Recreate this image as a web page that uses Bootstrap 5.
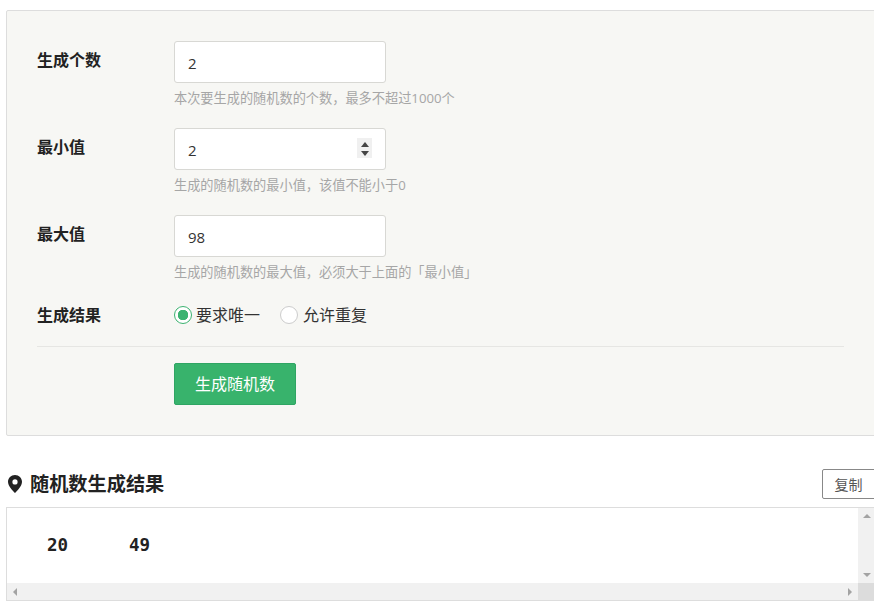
<!doctype html>
<html lang="zh"><head><meta charset="utf-8">
<link href="https://cdn.jsdelivr.net/npm/bootstrap@5.3.0/dist/css/bootstrap.min.css" rel="stylesheet">
<style>
html,body{height:602px;overflow:hidden;background:#fff}
body{font-family:"Open Sans","Noto Sans CJK SC",sans-serif;color:#222;font-size:16px}
.page-wrap{width:869px;margin-left:6px}
.gen-panel{margin-top:10px;height:426px;background:#f7f7f4;border:1px solid #ddd;border-radius:2px 0 0 2px;padding:30px 30px 0}
.gen-row{display:flex;height:87px}
.gen-label{width:137px;font-weight:700;font-size:16px;line-height:38px;color:#222}
.gen-field{position:relative}
.gen-input{width:212px;height:42px;border:1px solid #d8d8d4;border-radius:3px;padding:2px 13px 0;font-size:15px;color:#333;box-shadow:none;appearance:textfield}
.gen-input::-webkit-inner-spin-button{display:none}
.gen-spin{position:absolute;top:10px;left:183px;width:15px;height:20px;padding-top:2px;background:#f0f0f0;display:flex;flex-direction:column;justify-content:center;align-items:center;gap:4px}
.gen-help{font-size:13.2px;line-height:18px;margin-top:6px;color:#a6a6a6}
.gen-radio-row{display:flex;height:26px;align-items:center}
.gen-radio-row .gen-label{line-height:26px}
.gen-radio{margin:0;width:18px;height:18px;border:1px solid #ccc;background-color:#fff}
.gen-radio:checked{background-color:#fff;border-color:#3cb371;background-image:radial-gradient(circle,#3cb371 0 5px,transparent 5.5px)}
.gen-radio-text{font-size:16px;color:#333;margin:0 19px 0 5px}
.gen-radio-first{margin-left:4px;margin-right:20px}
.gen-rule{margin:18px 0 16px;border:0;border-top:1px solid #e6e6e3;opacity:1}
.gen-btn{margin-left:137px;width:122px;height:42px;padding:0;background:#38b36c;border:1px solid #2fa563;border-radius:2px;color:#fff;font-size:16px}
.res-head{height:71px;padding-top:33px}
.res-title{font-size:19.2px;font-weight:700;color:#222;margin:0;height:30px;line-height:30px;padding-left:2px}
.copy-btn{width:53px;height:30px;padding:0;border:1px solid #888;border-radius:2px 0 0 2px;background:#fff;color:#555;font-size:14px}
.res-box{height:94px;border:1px solid #ddd;border-right:0;display:flex;flex-direction:column}
.res-main{flex:1;display:flex;min-height:0}
.res-nums{flex:1;padding:25px 0 0 40px;font-family:"DejaVu Sans Mono",monospace;font-weight:700;font-size:17.5px;line-height:24px;color:#222}
.res-nums span{display:inline-block;width:82px}
.sb-v{width:17px;background:#f1f1f1;display:flex;flex-direction:column;justify-content:space-between;align-items:center;padding:6px 0}
.sb-h{height:17px;background:#f1f1f1;display:flex;align-items:center;justify-content:space-between}
.sb-corner{width:17px;height:17px;background:#dcdcdc}
.tri{width:0;height:0;border-style:solid;border-color:transparent}
.tri-up{border-width:0 4px 4px;border-bottom-color:#a3a3a3}
.tri-down{border-width:4px 4px 0;border-top-color:#a3a3a3}
.gen-spin .tri-up{border-width:0 4px 5px;border-bottom-color:#444}
.gen-spin .tri-down{border-width:5px 4px 0;border-top-color:#444}
.tri-left{border-width:4px 4px 4px 0;border-right-color:#a3a3a3;margin-left:6px}
.tri-right{border-width:4px 0 4px 4px;border-left-color:#a3a3a3;margin-left:auto;margin-right:6px}
</style></head>
<body>
<div class="page-wrap">
  <form class="gen-panel">
    <div class="gen-row"><div class="gen-label">生成个数</div><div class="gen-field"><input class="form-control gen-input" type="text" value="2"><div class="gen-help">本次要生成的随机数的个数，最多不超过1000个</div></div></div>
    <div class="gen-row"><div class="gen-label">最小值</div><div class="gen-field"><input class="form-control gen-input" type="number" value="2"><div class="gen-spin"><i class="tri tri-up"></i><i class="tri tri-down"></i></div><div class="gen-help">生成的随机数的最小值，该值不能小于0</div></div></div>
    <div class="gen-row"><div class="gen-label">最大值</div><div class="gen-field"><input class="form-control gen-input" type="text" value="98"><div class="gen-help">生成的随机数的最大值，必须大于上面的「最小值」</div></div></div>
    <div class="gen-radio-row">
      <div class="gen-label">生成结果</div>
      <input class="form-check-input gen-radio" type="radio" name="u" id="u1" checked><label class="gen-radio-text gen-radio-first" for="u1">要求唯一</label>
      <input class="form-check-input gen-radio" type="radio" name="u" id="u2"><label class="gen-radio-text" for="u2">允许重复</label>
    </div>
    <hr class="gen-rule">
    <button type="button" class="btn gen-btn d-block">生成随机数</button>
  </form>
  <div class="res-head d-flex justify-content-between">
    <h2 class="res-title d-flex align-items-center gap-2">
      <svg width="14" height="18" viewBox="0 0 14 18" aria-hidden="true"><path fill="#222" fill-rule="evenodd" d="M7 0C3 0 0 3 0 6.800 0 11 4.500 15.500 7 18c2.500-2.500 7-7 7-11.200C14 3 11 0 7 0zm0 4.300a2.600 2.600 0 1 1 0 5.200 2.600 2.600 0 0 1 0-5.200z"/></svg>
      随机数生成结果</h2>
    <button type="button" class="btn copy-btn">复制</button>
  </div>
  <div class="res-box">
    <div class="res-main">
      <div class="res-nums"><span>20</span><span>49</span></div>
      <div class="sb-v"><i class="tri tri-up"></i><i class="tri tri-down"></i></div>
    </div>
    <div class="d-flex"><div class="sb-h flex-grow-1"><i class="tri tri-left"></i><i class="tri tri-right"></i></div><div class="sb-corner"></div></div>
  </div>
</div>
</body></html>
